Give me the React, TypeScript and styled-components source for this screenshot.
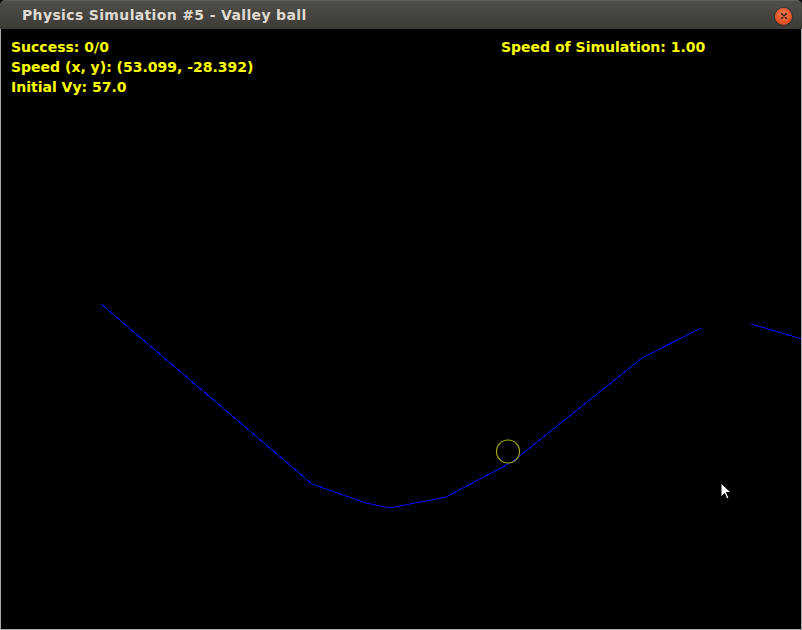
import React from "react";
import styled, { createGlobalStyle } from "styled-components";

const Global = createGlobalStyle`
  html, body { margin: 0; padding: 0; background: #000; }
  body { width: 802px; height: 630px; overflow: hidden; }
`;

const Window = styled.div`
  width: 802px;
  height: 630px;
  display: flex;
  flex-direction: column;
  box-sizing: border-box;
  background: #000;
`;

const TitleBar = styled.div`
  height: 29px;
  flex: 0 0 29px;
  display: flex;
  align-items: center;
  justify-content: space-between;
  padding: 0 10px 0 22px;
  box-sizing: border-box;
  border-radius: 5px 5px 0 0;
  background: linear-gradient(#4f4e49, #3c3b37);
  border-top: 1px solid #5f5e59;
`;

const Title = styled.span`
  font-family: "DejaVu Sans", sans-serif;
  font-weight: bold;
  font-size: 14px;
  letter-spacing: 0.35px;
  line-height: 28px;
  color: #dfdbd2;
  white-space: nowrap;
`;

const CloseButton = styled.div`
  width: 17px;
  height: 17px;
  border-radius: 50%;
  margin-top: 2px;
  background: radial-gradient(circle at 50% 35%, #f47a4f, #df4c21 70%, #b9391a);
  box-shadow: 0 0 0 1px rgba(0, 0, 0, 0.25);
  display: flex;
  align-items: center;
  justify-content: center;
`;

const Canvas = styled.div`
  flex: 1;
  position: relative;
  background: #000;
  border: 1px solid #a9a9a9;
  border-top: none;
  overflow: hidden;
`;

const Hud = styled.div`
  position: absolute;
  inset: 0;
  padding: 8px 0 0 10px;
  display: grid;
  grid-template-columns: 490px 1fr;
  align-content: start;
  pointer-events: none;
`;

const HudColumn = styled.div`
  display: flex;
  flex-direction: column;
`;

const HudLine = styled.div`
  font-family: "DejaVu Sans", sans-serif;
  font-weight: bold;
  font-size: 14px;
  line-height: 20px;
  color: #ffff00;
  white-space: nowrap;
`;

const Scene = styled.svg`
  position: absolute;
  left: -1px;
  top: -29px;
  width: 802px;
  height: 630px;
`;

const Cursor = styled.svg`
  position: absolute;
  left: 719px;
  top: 453px;
  width: 12px;
  height: 19px;
`;

export default function App() {
  return (
    <>
      <Global />
      <Window>
        <TitleBar>
          <Title>Physics Simulation #5 - Valley ball</Title>
          <CloseButton>
            <svg width="8" height="8" viewBox="0 0 8 8">
              <path d="M1.5 1.5 L6.5 6.5 M6.5 1.5 L1.5 6.5" stroke="#3b2219" strokeWidth="1.4" strokeLinecap="round" />
            </svg>
          </CloseButton>
        </TitleBar>
        <Canvas>
          <Scene viewBox="0 0 802 630">
            <polyline
              points="101,304 312,484 366,503 390,508 446,497 512,462 642,358 701,328"
              fill="none"
              stroke="#0000ff"
              strokeWidth="1"
              shapeRendering="crispEdges"
            />
            <polyline points="751,324 802,339" fill="none" stroke="#0000ff" strokeWidth="1" shapeRendering="crispEdges" />
            <circle cx="508" cy="451.5" r="11.5" fill="none" stroke="#a8a800" strokeWidth="1.2" />
          </Scene>
          <Hud>
            <HudColumn>
              <HudLine>Success: 0/0</HudLine>
              <HudLine>Speed (x, y): (53.099, -28.392)</HudLine>
              <HudLine>Initial Vy: 57.0</HudLine>
            </HudColumn>
            <HudColumn>
              <HudLine>Speed of Simulation: 1.00</HudLine>
            </HudColumn>
          </Hud>
          <Cursor viewBox="0 0 12 19">
            <path d="M1 1 L1 15 L4.5 11.5 L7 17 L9 16 L6.5 10.5 L11 10.5 Z" fill="#fff" stroke="#000" strokeWidth="1" strokeLinejoin="round" />
          </Cursor>
        </Canvas>
      </Window>
    </>
  );
}
